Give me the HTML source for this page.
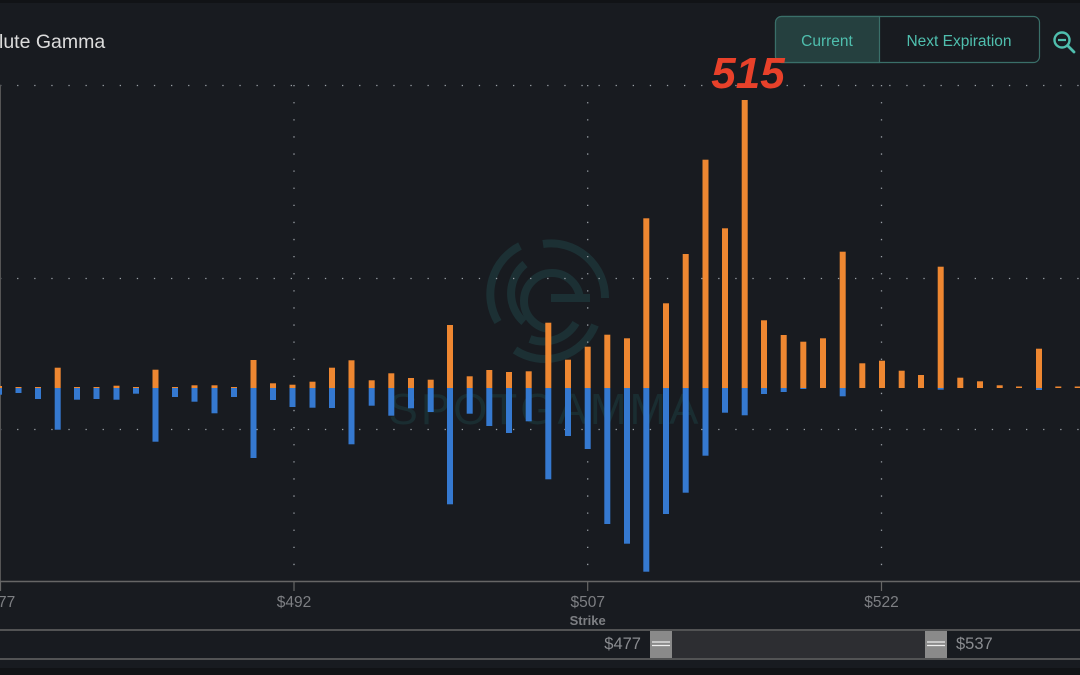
<!DOCTYPE html>
<html><head><meta charset="utf-8"><style>
html,body{margin:0;padding:0;background:#181b20;width:1080px;height:675px;overflow:hidden;font-family:"Liberation Sans",sans-serif}
</style></head><body>
<svg width="1080" height="675" viewBox="0 0 1080 675" xmlns="http://www.w3.org/2000/svg" style="position:absolute;left:0;top:0">
<rect x="0" y="0" width="1080" height="675" fill="#181b20"/>
<rect x="0" y="0" width="1080" height="3" fill="#111316"/>
<rect x="0" y="668" width="1080" height="7" fill="#111316"/>
<text x="-1" y="48" fill="#dcdcdc" font-size="19.5">lute Gamma</text>
<rect x="775.5" y="16.5" width="264" height="46" rx="6" fill="#181b20" stroke="#3a6f69" stroke-width="1.2"/>
<path d="M781.5 16.5 H879.5 V62.5 H781.5 A6 6 0 0 1 775.5 56.5 V22.5 A6 6 0 0 1 781.5 16.5Z" fill="#25403f" stroke="#3a6f69" stroke-width="1.2"/>
<text x="827" y="46" fill="#4fbfae" font-size="15.5" text-anchor="middle">Current</text>
<text x="959" y="46" fill="#4fbfae" font-size="15.5" text-anchor="middle">Next Expiration</text>
<circle cx="1062" cy="40" r="7.5" fill="none" stroke="#4fbfae" stroke-width="2.4"/>
<line x1="1058" y1="40" x2="1066" y2="40" stroke="#4fbfae" stroke-width="2.2"/>
<line x1="1067.5" y1="45.5" x2="1074" y2="52" stroke="#4fbfae" stroke-width="2.8" stroke-linecap="round"/>
<g fill="none" stroke="#1c3034" stroke-width="8">
<path d="M543 244 A54 54 0 0 1 605 298"/>
<path d="M520 246 A54 54 0 0 0 498 322"/>
<path d="M595 325 A54 54 0 0 1 515 350"/>
<path d="M525 264 A38 38 0 0 0 524 322"/>
<path d="M530 339 A38 38 0 0 0 576 323"/>
<path d="M580 301 A28 28 0 1 0 551 329"/>
<path d="M551 298 H590"/>
</g>
<text x="545" y="424" fill="#1a2d31" font-size="44" text-anchor="middle" letter-spacing="3">SPOTGAMMA</text>
<g stroke="#9aa0a6" stroke-width="1.3" stroke-dasharray="1.3 15.8" fill="none">
<line x1="0" y1="85.5" x2="1080" y2="85.5"/>
<line x1="0" y1="278.5" x2="1080" y2="278.5"/>
<line x1="0" y1="429.5" x2="1080" y2="429.5"/>
<line x1="294" y1="85" x2="294" y2="580"/>
<line x1="587.7" y1="85" x2="587.7" y2="580"/>
<line x1="881.5" y1="85" x2="881.5" y2="580"/>
</g>
<line x1="0.5" y1="85" x2="0.5" y2="582" stroke="#555" stroke-width="1"/>
<g fill="#ee8731">
<rect x="-4" y="386" width="6" height="2"/>
<rect x="15.5" y="387" width="6" height="1"/>
<rect x="35" y="387" width="6" height="1"/>
<rect x="54.7" y="367.7" width="6" height="20.3"/>
<rect x="74" y="387" width="6" height="1"/>
<rect x="93.5" y="387" width="6" height="1"/>
<rect x="113.5" y="385.7" width="6" height="2.3"/>
<rect x="133" y="387" width="6" height="1"/>
<rect x="152.5" y="369.7" width="6" height="18.3"/>
<rect x="172" y="387" width="6" height="1"/>
<rect x="191.5" y="385.3" width="6" height="2.7"/>
<rect x="211.5" y="385.3" width="6" height="2.7"/>
<rect x="231" y="387" width="6" height="1"/>
<rect x="250.5" y="360" width="6" height="28"/>
<rect x="270" y="383.3" width="6" height="4.7"/>
<rect x="289.5" y="384.7" width="6" height="3.3"/>
<rect x="309.5" y="381.7" width="6" height="6.3"/>
<rect x="329" y="367.7" width="6" height="20.3"/>
<rect x="348.5" y="360.3" width="6" height="27.7"/>
<rect x="368.7" y="380.3" width="6" height="7.7"/>
<rect x="388.3" y="373.3" width="6" height="14.7"/>
<rect x="408" y="378" width="6" height="10"/>
<rect x="427.7" y="379.7" width="6" height="8.3"/>
<rect x="447" y="325" width="6" height="63"/>
<rect x="466.7" y="376.3" width="6" height="11.7"/>
<rect x="486.3" y="370" width="6" height="18"/>
<rect x="506" y="372" width="6" height="16"/>
<rect x="525.7" y="371.3" width="6" height="16.7"/>
<rect x="545.3" y="322.7" width="6" height="65.3"/>
<rect x="565" y="359.7" width="6" height="28.3"/>
<rect x="584.7" y="346.7" width="6" height="41.3"/>
<rect x="604.3" y="334.7" width="6" height="53.3"/>
<rect x="624" y="338.3" width="6" height="49.7"/>
<rect x="643.3" y="218.3" width="6" height="169.7"/>
<rect x="663" y="303.3" width="6" height="84.7"/>
<rect x="682.7" y="254" width="6" height="134"/>
<rect x="702.5" y="159.7" width="6" height="228.3"/>
<rect x="722" y="228.3" width="6" height="159.7"/>
<rect x="741.7" y="100" width="6" height="288"/>
<rect x="761" y="320.3" width="6" height="67.7"/>
<rect x="780.7" y="335" width="6" height="53"/>
<rect x="800.3" y="341.7" width="6" height="46.3"/>
<rect x="820" y="338.3" width="6" height="49.7"/>
<rect x="839.7" y="251.7" width="6" height="136.3"/>
<rect x="859.3" y="363.3" width="6" height="24.7"/>
<rect x="879" y="360.7" width="6" height="27.3"/>
<rect x="898.7" y="370.7" width="6" height="17.3"/>
<rect x="918" y="375" width="6" height="13"/>
<rect x="937.7" y="266.7" width="6" height="121.3"/>
<rect x="957.3" y="377.7" width="6" height="10.3"/>
<rect x="977" y="381.3" width="6" height="6.7"/>
<rect x="996.7" y="385.3" width="6" height="2.7"/>
<rect x="1016" y="386.5" width="6" height="1.5"/>
<rect x="1036" y="348.7" width="6" height="39.3"/>
<rect x="1055.3" y="386.5" width="6" height="1.5"/>
<rect x="1074.7" y="386.5" width="6" height="1.5"/>
</g>
<g fill="#3579d0">
<rect x="-4" y="388" width="6" height="6.7"/>
<rect x="15.5" y="388" width="6" height="5"/>
<rect x="35" y="388" width="6" height="11"/>
<rect x="54.7" y="388" width="6" height="41.7"/>
<rect x="74" y="388" width="6" height="11.7"/>
<rect x="93.5" y="388" width="6" height="11"/>
<rect x="113.5" y="388" width="6" height="11.7"/>
<rect x="133" y="388" width="6" height="5.7"/>
<rect x="152.5" y="388" width="6" height="53.7"/>
<rect x="172" y="388" width="6" height="9"/>
<rect x="191.5" y="388" width="6" height="13.7"/>
<rect x="211.5" y="388" width="6" height="25.3"/>
<rect x="231" y="388" width="6" height="9"/>
<rect x="250.5" y="388" width="6" height="70"/>
<rect x="270" y="388" width="6" height="12"/>
<rect x="289.5" y="388" width="6" height="19"/>
<rect x="309.5" y="388" width="6" height="19.7"/>
<rect x="329" y="388" width="6" height="20"/>
<rect x="348.5" y="388" width="6" height="56.3"/>
<rect x="368.7" y="388" width="6" height="17.7"/>
<rect x="388.3" y="388" width="6" height="27.7"/>
<rect x="408" y="388" width="6" height="20.3"/>
<rect x="427.7" y="388" width="6" height="24"/>
<rect x="447" y="388" width="6" height="116.3"/>
<rect x="466.7" y="388" width="6" height="25.7"/>
<rect x="486.3" y="388" width="6" height="38"/>
<rect x="506" y="388" width="6" height="45"/>
<rect x="525.7" y="388" width="6" height="33.3"/>
<rect x="545.3" y="388" width="6" height="91.3"/>
<rect x="565" y="388" width="6" height="48"/>
<rect x="584.7" y="388" width="6" height="61"/>
<rect x="604.3" y="388" width="6" height="136"/>
<rect x="624" y="388" width="6" height="155.7"/>
<rect x="643.3" y="388" width="6" height="183.7"/>
<rect x="663" y="388" width="6" height="126"/>
<rect x="682.7" y="388" width="6" height="104.7"/>
<rect x="702.5" y="388" width="6" height="67.7"/>
<rect x="722" y="388" width="6" height="24.7"/>
<rect x="741.7" y="388" width="6" height="27.3"/>
<rect x="761" y="388" width="6" height="6"/>
<rect x="780.7" y="388" width="6" height="4"/>
<rect x="800.3" y="388" width="6" height="1"/>
<rect x="839.7" y="388" width="6" height="8.3"/>
<rect x="937.7" y="388" width="6" height="1.7"/>
<rect x="1036" y="388" width="6" height="2"/>
</g>
<text x="748" y="88" fill="#e8412a" font-size="44" font-weight="bold" font-style="italic" text-anchor="middle">515</text>
<line x1="0" y1="581.5" x2="1080" y2="581.5" stroke="#666" stroke-width="1.5"/>
<g stroke="#666" stroke-width="1.2">
<line x1="294" y1="581" x2="294" y2="591"/>
<line x1="587.7" y1="581" x2="587.7" y2="591"/>
<line x1="881.5" y1="581" x2="881.5" y2="591"/>
<line x1="0.5" y1="581" x2="0.5" y2="591"/>
</g>
<g fill="#7d7f83" font-size="15.5" text-anchor="middle">
<text x="-2" y="607">$477</text>
<text x="294" y="607">$492</text>
<text x="587.7" y="607">$507</text>
<text x="881.5" y="607">$522</text>
</g>
<text x="587.7" y="625" fill="#7d7f83" font-size="13" font-weight="bold" text-anchor="middle">Strike</text>
<rect x="-1" y="630" width="1083" height="29" fill="#181b20" stroke="#666" stroke-width="1.5"/>
<rect x="672" y="631" width="253" height="27" fill="#2d2e32"/>
<rect x="650" y="631" width="22" height="27" fill="#8a8a8a"/>
<rect x="925" y="631" width="22" height="27" fill="#8a8a8a"/>
<g stroke="#eee" stroke-width="1.3">
<line x1="652" y1="642" x2="670" y2="642"/><line x1="652" y1="645.5" x2="670" y2="645.5"/>
<line x1="927" y1="642" x2="945" y2="642"/><line x1="927" y1="645.5" x2="945" y2="645.5"/>
</g>
<text x="641" y="649" fill="#8a8c90" font-size="16.5" text-anchor="end">$477</text>
<text x="956" y="649" fill="#8a8c90" font-size="16.5">$537</text>
</svg>
</body></html>
